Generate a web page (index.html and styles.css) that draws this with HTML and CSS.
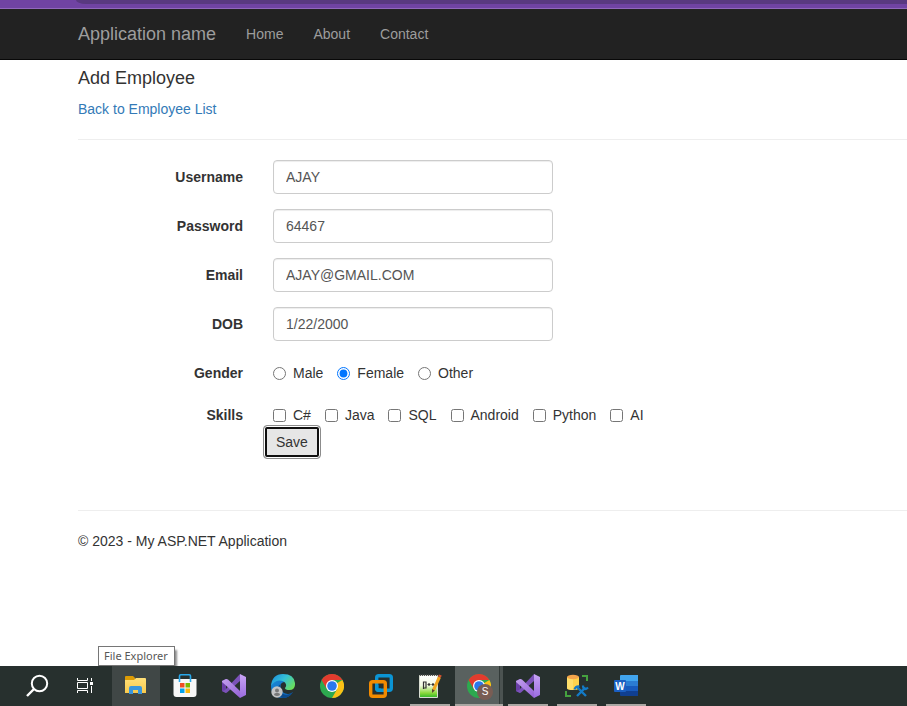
FILE: index.html
```html
<!DOCTYPE html>
<html lang="en">
<head>
<meta charset="utf-8">
<title>Add Employee - My ASP.NET Application</title>
<link rel="stylesheet" href="styles.css">
</head>
<body>
<svg class="defs" width="0" height="0" aria-hidden="true">
  <defs>
    <linearGradient id="vsRight" x1="0" y1="0" x2="0" y2="1">
      <stop offset="0" stop-color="#c9a5f5"/><stop offset="1" stop-color="#9a6be0"/>
    </linearGradient>
    <linearGradient id="vsBand" x1="0" y1="0" x2="1" y2="1">
      <stop offset="0" stop-color="#c3a0ee"/><stop offset="1" stop-color="#9461d6"/>
    </linearGradient>
    <linearGradient id="edgeTop" x1="0" y1="0.200" x2="1" y2="0.800">
      <stop offset="0" stop-color="#1d93de"/><stop offset=".45" stop-color="#35c1d6"/><stop offset="1" stop-color="#6fe04f"/>
    </linearGradient>
    <linearGradient id="edgeBody" x1="0" y1="0" x2="1" y2="1">
      <stop offset="0" stop-color="#1a8ad8"/><stop offset="1" stop-color="#0c5fb4"/>
    </linearGradient>
    <linearGradient id="noteFill" x1="0" y1="0" x2="0" y2="1">
      <stop offset="0" stop-color="#ffffff"/><stop offset=".45" stop-color="#f2fae2"/><stop offset=".8" stop-color="#8ad83a"/><stop offset="1" stop-color="#2fb52a"/>
    </linearGradient>
    <linearGradient id="folder" x1="0" y1="0" x2="0" y2="1">
      <stop offset="0" stop-color="#ffdf78"/><stop offset="1" stop-color="#f9ca4c"/>
    </linearGradient>
    <symbol id="vs" viewBox="0 0 24 24">
      <path fill="#6a3fa8" d="M0 7 4 5v14l-4-2z"/>
      <path fill="#7b52b8" d="M0 17 3 16 18 0v7L5 18.500 4 19z"/>
      <path fill="url(#vsBand)" d="M0 7 4 5q1-.3 2 .6L18 17v7L0 8z"/>
      <path fill="url(#vsRight)" d="m18 0 6 3v18l-6 3z"/>
    </symbol>
    <symbol id="chrome" viewBox="0 0 24 24">
      <circle cx="12" cy="12" r="12" fill="#2da94f"/>
      <path fill="#fbc116" d="M12 12 22.400 6A12 12 0 0 1 12 24l5.200-9z"/>
      <path fill="#e33b2e" d="M1.600 6A12 12 0 0 1 22.400 6H12L6.800 15z"/>
      <circle cx="12" cy="12" r="6" fill="#fff"/>
      <circle cx="12" cy="12" r="4.800" fill="#2a78ee"/>
    </symbol>
  </defs>
</svg>

<div class="browser-edge"><div class="address-bar"></div></div>

<header class="navbar">
  <a class="brand" href="#">Application name</a>
  <nav class="nav">
    <a href="#">Home</a>
    <a href="#">About</a>
    <a href="#">Contact</a>
  </nav>
</header>

<main class="content">
  <h4>Add Employee</h4>
  <p class="back"><a href="#">Back to Employee List</a></p>
  <hr>
  <form class="employee-form">
    <div class="form-row">
      <label for="username">Username</label>
      <input class="form-control" id="username" type="text" value="AJAY">
    </div>
    <div class="form-row">
      <label for="password">Password</label>
      <input class="form-control" id="password" type="text" value="64467">
    </div>
    <div class="form-row">
      <label for="email">Email</label>
      <input class="form-control" id="email" type="text" value="AJAY@GMAIL.COM">
    </div>
    <div class="form-row">
      <label for="dob">DOB</label>
      <input class="form-control" id="dob" type="text" value="1/22/2000">
    </div>
    <div class="form-row choices" role="radiogroup" aria-labelledby="gender">
      <span class="row-label" id="gender">Gender</span>
      <div class="options">
        <label><input type="radio" name="gender">Male</label>
        <label><input type="radio" name="gender" checked>Female</label>
        <label><input type="radio" name="gender">Other</label>
      </div>
    </div>
    <div class="form-row choices" role="group" aria-labelledby="skills">
      <span class="row-label" id="skills">Skills</span>
      <div class="options">
        <label><input type="checkbox">C#</label>
        <label><input type="checkbox">Java</label>
        <label><input type="checkbox">SQL</label>
        <label><input type="checkbox">Android</label>
        <label><input type="checkbox">Python</label>
        <label><input type="checkbox">AI</label>
      </div>
    </div>
    <button class="save" type="button">Save</button>
  </form>
  <hr>
  <footer>© 2023 - My ASP.NET Application</footer>
</main>

<div class="taskbar">
  <button class="task" type="button" aria-label="Search">
    <svg viewBox="0 0 24 24"><circle cx="14.500" cy="9.500" r="7.700" fill="none" stroke="#fff" stroke-width="2"/><path d="M9 15 2 22" stroke="#fff" stroke-width="2.400"/></svg>
  </button>
  <button class="task task-view" type="button" aria-label="Task View">
    <svg viewBox="0 0 24 24" fill="none" stroke="#fff" stroke-width="1"><path d="M3.500 4v2.500h10V4M3.500 19v-2.500h10V19M3.500 8.500h10v6h-10zM17.500 4v3M17.500 12v7"/><path fill="#fff" stroke="none" d="M16 8h3v3h-3z"/></svg>
  </button>
  <div class="task-slot">
    <button class="task hover" type="button" aria-labelledby="tip">
      <svg viewBox="0 0 24 24"><path fill="#dc9b05" d="M1 3q0-1 1-1h7l2 2v3H1z"/><path fill="url(#folder)" d="M1 6h9l2-2h9q1 0 1 1v14H1z"/><path fill="#3b96dc" d="M5 20v-6q0-2 2-2h9q2 0 2 2v6h-4v-4H9v4z"/></svg>
    </button>
    <div class="tooltip" id="tip" role="tooltip">File Explorer</div>
  </div>
  <button class="task" type="button" aria-label="Microsoft Store">
    <svg viewBox="0 0 24 24"><path fill="#f7f7f7" d="M.5 5h23v15q0 3-3 3h-17q-3 0-3-3z"/><path d="M6.500 8V2q0-1.200 1.200-1.200h8.600q1.200 0 1.200 1.200v6" fill="none" stroke="#28a8ea" stroke-width="1.600"/><path fill="#f04e23" d="M7 9h4.500v4.500H7z"/><path fill="#7db900" d="M12.500 9H17v4.500h-4.500z"/><path fill="#03a2ec" d="M7 14.500h4.500V19H7z"/><path fill="#fbb80d" d="M12.500 14.500H17V19h-4.500z"/></svg>
  </button>
  <button class="task" type="button" aria-label="Visual Studio"><svg><use href="#vs"/></svg></button>
  <button class="task" type="button" aria-label="Microsoft Edge">
    <svg viewBox="0 0 24 24"><path fill="url(#edgeBody)" d="M0 12Q1 5 8 5q5 0 6.500 3Q9 8 9.500 13q.5 6 7 7 3 .3 5.500-2-4 6-10 6Q0 24 0 12z"/><path fill="#0b4a8c" d="M9.500 10q-2.500 6 2 9.500 4.500 3.500 10.500-1.500-4 6-10 6-5-1-6-6-.5-5 3.500-8z"/><path fill="url(#edgeTop)" d="M0 12Q1 0 12 0q11 0 12 9 .5 7-5.500 7-4.500 0-4.500-2 1.500-1.500 1-3.500-1-4-7-4Q3 7 0 12z"/><circle cx="6" cy="18" r="5.700" fill="#c3c4c5"/><circle cx="6" cy="16.500" r="2" fill="#777"/><path fill="#777" d="M3 21q0-2 2-2h2q2 0 2 2-3 2-6 0z"/></svg>
  </button>
  <button class="task" type="button" aria-label="Google Chrome"><svg><use href="#chrome"/></svg></button>
  <button class="task" type="button" aria-label="VMware Workstation">
    <svg viewBox="0 0 24 24" fill="none" stroke-width="3.400"><rect x="7.700" y="1.700" width="14.600" height="14.600" rx="2" stroke="#0b95d5"/><rect x="1.700" y="7.700" width="14.600" height="14.600" rx="2" stroke="#f38b00"/><path d="M7.700 11v3.300q0 2 2 2H12" stroke="#0b95d5"/></svg>
  </button>
  <button class="task running" type="button" aria-label="Notepad++">
    <svg viewBox="0 0 24 24"><path fill="url(#noteFill)" stroke="#d9ddd2" d="M1.500 1.500h18v22h-18z"/><path stroke="#555" stroke-width="1.500" stroke-dasharray="1 1" d="M2 1.200h17"/><path fill="none" stroke="#333" stroke-width="1.200" d="M5.500 15V8h2.500v6H5.500M9.500 10.500h3M11 9v3M13.500 10.500h3M15 9v3"/><path stroke="#f3a51f" stroke-width="3" d="m21.500 3-6 13"/><path stroke="#d35230" stroke-width="3" d="m22.300 1-.8 2"/><path fill="#5c4930" d="m14 15 2.800 1.500L14 19z"/></svg>
  </button>
  <button class="task running active" type="button" aria-label="Google Chrome, profile S">
    <svg><use href="#chrome"/></svg><span class="profile">S</span>
  </button>
  <button class="task running" type="button" aria-label="Visual Studio project"><svg><use href="#vs"/></svg></button>
  <button class="task running" type="button" aria-label="SQL Server Management Studio">
    <svg viewBox="0 0 24 24"><path fill="#ffd44c" d="M2 3v11q0 2 6 2t6-2V3z"/><path fill="#ffe989" d="M2 4v11q2 1 6 1V5z" opacity=".5"/><ellipse cx="8" cy="3" rx="6" ry="2.200" fill="#f4a54b"/><path fill="none" stroke="#45a23f" stroke-width="2" d="M17 2h5v5M1 17v5h5"/><path fill="none" stroke="#147ac5" stroke-width="2.400" d="m12 13 9 9M20.500 13.500 12 22"/><path fill="none" stroke="#147ac5" stroke-width="2.200" d="M9.500 15.500q1-3.500 5-3M18 11.500q0 3 1.500 3.500t3.500-1.500"/></svg>
  </button>
  <button class="task running" type="button" aria-label="Word">
    <svg class="word" viewBox="0 0 24 24"><path fill="#41a5ee" d="M6 2q0-1 1-1h17v6H6z"/><path fill="#2b7cd3" d="M6 7h18v5H6z"/><path fill="#185abd" d="M6 12h18v5H6z"/><path fill="#103f91" d="M6 17h18v5H7q-1 0-1-1z"/><rect y="6" width="12" height="12" rx="1" fill="#1b5fc2"/><text x="6" y="16" text-anchor="middle">W</text></svg>
  </button>
</div>
</body>
</html>
```
FILE: styles.css
```css
* {
  box-sizing: border-box;
}

body {
  display: flex;
  flex-direction: column;
  min-height: 100vh;
  margin: 0;
  background: #fff;
  color: #333;
  font: 14px/20px "Liberation Sans", Arial, sans-serif;
}

a {
  color: #337ab7;
  text-decoration: none;
}

button,
input {
  font: inherit;
}

.defs {
  position: absolute;
}

/* Bottom edge of the browser toolbar */
.browser-edge {
  height: 9px;
  padding-left: 76px;
  background: #7043a3;
  border-bottom: 1px solid #9168bd;
}

.address-bar {
  height: 4px;
  background: #593980;
  border-bottom-left-radius: 10px 4px;
}

.navbar {
  display: flex;
  align-items: center;
  gap: 30px;
  height: 51px;
  padding-left: 78px;
  background: #222;
  border-bottom: 1px solid #080808;
}

.navbar a {
  color: #9d9d9d;
}

.brand {
  font-size: 18px;
}

.nav {
  display: flex;
  gap: 30px;
}

.content {
  padding-left: 78px;
}

h4 {
  margin: 8px 0 11px;
  font-size: 18px;
  font-weight: 400;
  line-height: 20px;
}

.back {
  margin: 0;
}

hr {
  margin: 20px 0;
  border: 0;
  border-top: 1px solid #eee;
}

.employee-form {
  padding-bottom: 31px;
}

.form-row {
  display: grid;
  grid-template-columns: 165px minmax(0, 1fr);
  column-gap: 30px;
  align-items: center;
  margin-bottom: 15px;
}

.form-row > label,
.row-label {
  text-align: right;
  font-weight: 700;
}

.form-control {
  width: 100%;
  max-width: 280px;
  height: 34px;
  padding: 6px 12px;
  border: 1px solid #ccc;
  border-radius: 4px;
  background: #fff;
  color: #555;
  box-shadow: inset 0 1px 1px rgba(0, 0, 0, .075);
}

.choices {
  margin-bottom: 0;
  padding-top: 7px;
}

.choices + .choices {
  padding-top: 22px;
}

.options {
  display: flex;
  flex-wrap: wrap;
  gap: 14px;
}

.options label {
  display: flex;
  align-items: center;
  gap: 7px;
}

.options input {
  width: 13px;
  height: 13px;
  margin: 0;
}

.save {
  display: block;
  height: 34px;
  margin-left: 185px;
  padding: 6px 12px;
  border: 1px solid #8c8c8c;
  border-radius: 4px;
  background: #e6e6e6;
  color: #333;
  box-shadow: inset 0 0 0 1px #fff, inset 0 0 0 3px #101010;
}

.taskbar {
  position: sticky;
  bottom: 0;
  display: flex;
  gap: 1px;
  height: 40px;
  margin-top: auto;
  padding-left: 13px;
  background: #27302e;
}

.task {
  position: relative;
  display: flex;
  align-items: center;
  justify-content: center;
  width: 48px;
  height: 40px;
  padding: 0;
  border: 0;
  background: none;
}

.task svg {
  width: 24px;
  height: 24px;
}

.task-view {
  margin-right: 1px;
}

.task-slot {
  position: relative;
}

.hover {
  background: #404746;
}

.running::after {
  content: "";
  position: absolute;
  right: 4px;
  bottom: 0;
  left: 4px;
  height: 2px;
  background: #aaa7a3;
}

.active {
  background: linear-gradient(90deg, #59615f 44px, #323a38 44px, #323a38 45px, #4b5351 45px);
}

.active::after {
  right: 0;
  left: 0;
}

.profile {
  position: absolute;
  top: 18px;
  left: 22px;
  width: 16px;
  height: 16px;
  border-radius: 50%;
  background: #795d54;
  color: #fff;
  font-size: 10px;
  line-height: 16px;
  text-align: center;
}

.word text {
  fill: #fff;
  font: 700 10px "Liberation Sans", Arial, sans-serif;
}

.tooltip {
  position: absolute;
  bottom: 40px;
  left: -14px;
  padding: 0 6px 0 5px;
  border: 1px solid #767676;
  background: #fff;
  box-shadow: 3px 3px 2px -1px rgba(0, 0, 0, .45);
  clip-path: inset(0 -4px 0 0);
  color: #575757;
  font: 11px/18px "Noto Sans", "Open Sans", sans-serif;
  white-space: nowrap;
}
```
